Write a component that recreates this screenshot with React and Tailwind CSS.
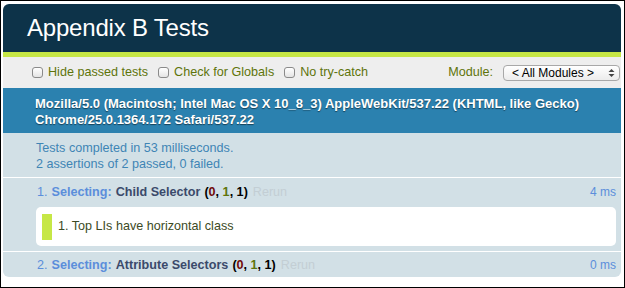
import React from 'react';

const font = { fontFamily: '"Liberation Sans", Arial, sans-serif' };

function Checkbox({ label }) {
  return (
    <label className="flex items-center gap-[5px]">
      <span className="w-[11px] h-[11px] rounded-[3px] border border-[#8a8a8a] bg-gradient-to-b from-white to-[#e4e4e4]" />
      <span>{label}</span>
    </label>
  );
}

function Counts() {
  return (
    <span className="font-bold text-black">
      (<span className="text-[#710909]">0</span>, <span className="text-[#5e740b]">1</span>, 1)
    </span>
  );
}

function TestTitle({ num, name, ms }) {
  return (
    <div className="flex items-center leading-[16px] text-[12.6px]">
      <span className="text-[#5b8edb]">{num}. </span>
      <span className="ml-[4px] font-bold text-[#5b8edb]">Selecting:</span>
      <span className="ml-[4px] font-bold text-[#3b4a6b]">{name}</span>
      <span className="ml-[4px]"><Counts /></span>
      <span className="ml-[5px] text-[#c3ced4]">Rerun</span>
      <span className="ml-auto text-[12px] text-[#5b8edb]">{ms}</span>
    </div>
  );
}

export default function App() {
  return (
    <div className="w-[625px] h-[288px] border border-black bg-white pt-[3px] pl-[2px] pr-[3px]" style={font}>
      {/* Header */}
      <div className="h-[48px] rounded-t-[6px] bg-[#0d3349] flex items-center pl-[24px]">
        <h1 className="text-white text-[24px] tracking-[-0.2px]">Appendix B Tests</h1>
      </div>
      <div className="h-[5px] bg-[#c6e746]" />

      {/* Toolbar */}
      <div className="h-[31px] bg-[#eeeeee] flex items-center pl-[29px] pr-[1px] text-[12.6px] text-[#5e740b] gap-[10px]">
        <Checkbox label="Hide passed tests" />
        <Checkbox label="Check for Globals" />
        <Checkbox label="No try-catch" />
        <span className="ml-auto">Module:</span>
        <div className="w-[117px] h-[16px] rounded-[4px] border border-[#a8a8a8] bg-gradient-to-b from-white to-[#ececec] flex items-center pl-[8px] pr-[4px] text-[12px] text-black">
          <span>&lt; All Modules &gt;</span>
          <svg className="ml-auto" width="7" height="10" viewBox="0 0 7 10">
            <path d="M0.5 4 L3.5 1 L6.5 4 Z" fill="#444" />
            <path d="M0.5 6 L3.5 9 L6.5 6 Z" fill="#444" />
          </svg>
        </div>
      </div>

      {/* User agent */}
      <div className="h-[45px] bg-[#2b81af] pl-[32px] pt-[8px] text-white font-bold text-[13px] leading-[16px] [text-shadow:0_1px_1px_rgba(0,0,0,0.5)]">
        <div>Mozilla/5.0 (Macintosh; Intel Mac OS X 10_8_3) AppleWebKit/537.22 (KHTML, like Gecko)</div>
        <div>Chrome/25.0.1364.172 Safari/537.22</div>
      </div>

      {/* Result */}
      <div className="h-[45px] bg-[#d2e0e6] border-b border-white pl-[33px] pt-[7px] text-[12.6px] leading-[16px] text-[#3f85b5]">
        <div>Tests completed in 53 milliseconds.</div>
        <div>2 assertions of 2 passed, 0 failed.</div>
      </div>

      {/* Tests */}
      <div className="bg-[#d2e0e6] border-b border-white pl-[34px] pr-[5px] pt-[6px] pb-[5px]">
        <TestTitle num="1" name="Child Selector" ms="4 ms" />
        <div className="mt-[7px] -ml-[1px] h-[39px] rounded-[5px] bg-white flex items-center pl-[6px] gap-[6px]">
          <span className="w-[10px] h-[26px] bg-[#c6e746]" />
          <span className="text-[12.6px] text-[#3c4a24]">1. Top LIs have horizontal class</span>
        </div>
      </div>
      <div className="h-[25px] bg-[#d2e0e6] rounded-b-[6px] pl-[34px] pr-[5px] pt-[5px]">
        <TestTitle num="2" name="Attribute Selectors" ms="0 ms" />
      </div>
    </div>
  );
}
